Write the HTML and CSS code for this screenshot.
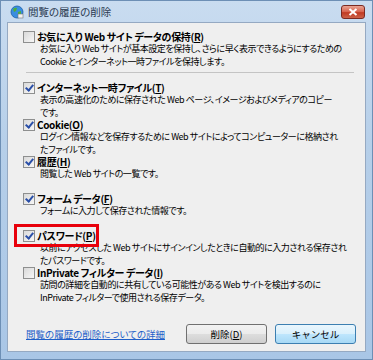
FILE: index.html
```html
<!DOCTYPE html>
<html lang="ja">
<head>
  <meta charset="UTF-8" />
  <title>閲覧の履歴の削除</title>
  <link rel="stylesheet" href="styles.css">
</head>
<body>
  <div class="window">
    <div class="titlebar">
      <svg class="app-icon" width="14" height="14" viewBox="0 0 14 14">
        <circle cx="7" cy="7" r="6" fill="#3a8ee0" stroke="#1c5ea8" stroke-width="0.8"/>
        <path d="M3 4 Q5 2 7 3 L6 6 L4 7 Z" fill="#4caf3c"/>
        <path d="M8 7 L11 6 L11 10 L8 11 Z" fill="#4caf3c"/>
        <rect x="8" y="9" width="5" height="4" fill="#f2f2f2" stroke="#777" stroke-width="0.6"/>
      </svg>
      <span class="title">閲覧の履歴の削除</span>
      <div class="close-btn">
        <svg width="10" height="8" viewBox="0 0 10 8">
          <path d="M1.5 1 L8.5 7 M8.5 1 L1.5 7" stroke="#fff" stroke-width="2"/>
        </svg>
      </div>
    </div>

    <div class="content">
      <div class="item">
        <div class="label"><span class="box"></span>お気に入り Web サイト データの保持(<u>R</u>)</div>
        <div class="desc">お気に入り Web サイトが基本設定を保持し、さらに早く表示できるようにするための<br>Cookie とインターネット一時ファイルを保持します。</div>
      </div>
      <hr class="sep">

      <div class="item">
        <div class="label"><span class="box checked"></span>インターネット一時ファイル(<u>T</u>)</div>
        <div class="desc">表示の高速化のために保存された Web ページ、イメージおよびメディアのコピー<br>です。</div>
      </div>
      <div class="item">
        <div class="label"><span class="box checked"></span>Cookie(<u>O</u>)</div>
        <div class="desc">ログイン情報などを保存するために Web サイトによってコンピューターに格納され<br>たファイルです。</div>
      </div>
      <div class="item">
        <div class="label"><span class="box checked"></span>履歴(<u>H</u>)</div>
        <div class="desc">閲覧した Web サイトの一覧です。</div>
      </div>
      <div class="item">
        <div class="label"><span class="box checked"></span>フォーム データ(<u>F</u>)</div>
        <div class="desc">フォームに入力して保存された情報です。</div>
      </div>
      <div class="item">
        <div class="label"><span class="box checked"></span>パスワード(<u>P</u>)</div>
        <div class="desc">以前にアクセスした Web サイトにサインインしたときに自動的に入力される保存され<br>たパスワードです。</div>
        <div class="highlight"></div>
      </div>
      <div class="item">
        <div class="label"><span class="box"></span>InPrivate フィルター データ(<u>I</u>)</div>
        <div class="desc">訪問の詳細を自動的に共有している可能性がある Web サイトを検出するのに<br>InPrivate フィルターで使用される保存データ。</div>
      </div>

      <div class="footer">
        <a class="link" href="#">閲覧の履歴の削除についての詳細</a>
        <div class="buttons">
          <button class="btn">削除(<u>D</u>)</button>
          <button class="btn default">キャンセル</button>
        </div>
      </div>
    </div>
  </div>
</body>
</html>
```

FILE: styles.css
```css
body {
  margin: 0;
  font-family: "Noto Sans CJK JP", "Liberation Sans", sans-serif;
  font-feature-settings: "palt";
  background: #ffffff;
}

.window {
  width: 373px;
  height: 360px;
  box-sizing: border-box;
  background: linear-gradient(180deg, #c9dcf0 0%, #b6cfe9 40%, #a9c6e6 100%);
  border: 1px solid #6d8fb5;
  display: flex;
  flex-direction: column;
}

.titlebar {
  height: 21px;
  display: flex;
  align-items: center;
  padding: 0 7px 0 9px;
}
.app-icon {
  margin-right: 4px;
  margin-top: 1px;
}
.title {
  font-size: 10.5px;
  color: #2a3a50;
  flex: 1;
}
.close-btn {
  width: 22px;
  height: 12px;
  border: 1px solid #7b2a22;
  border-radius: 3px;
  background: linear-gradient(180deg, #e9a494 0%, #d7614c 50%, #c03a23 55%, #cc6148 100%);
  display: flex;
  align-items: center;
  justify-content: center;
  margin-top: 1px;
}

.content {
  margin: 0 6px 7px 6px;
  flex: 1;
  background: #efefef;
  border: 1px solid #95a9c2;
  padding: 8px 0 0 15px;
  display: flex;
  flex-direction: column;
}

.item {
  height: 37px;
  flex: none;
  position: relative;
}
.label {
  display: flex;
  align-items: center;
  font-size: 10px;
  font-weight: bold;
  letter-spacing: -0.35px;
  line-height: 12px;
  height: 12px;
  color: #000;
}
.label u, .btn u {
  text-decoration: underline;
}
.box {
  width: 10px;
  height: 10px;
  border: 1px solid #8e8f8f;
  background: linear-gradient(135deg, #d9d9d9, #f7f7f7);
  margin-right: 2px;
  flex: none;
  position: relative;
}
.box.checked::after {
  content: "";
  position: absolute;
  left: 3px;
  top: 0px;
  width: 3px;
  height: 6px;
  border: solid #2a4fa8;
  border-width: 0 2px 2px 0;
  transform: rotate(40deg);
}
.desc {
  margin-left: 17px;
  font-size: 9px;
  letter-spacing: -0.45px;
  line-height: 12.5px;
  color: #000;
  white-space: nowrap;
}

.sep {
  border: none;
  border-top: 1px solid #c4c4c4;
  margin: 4px 11px 9px 3px;
}

.highlight {
  position: absolute;
  left: -9px;
  top: -6px;
  width: 79px;
  height: 17px;
  border: 3px solid #e8000b;
}

.footer {
  margin-top: 20px;
  display: flex;
  align-items: center;
  justify-content: space-between;
  padding-right: 9px;
}
.link {
  font-size: 9.5px;
  color: #1f5fc9;
  text-decoration: underline;
  margin-left: 3px;
}
.buttons {
  display: flex;
  gap: 8px;
}
.btn {
  width: 81px;
  height: 20px;
  font-family: inherit;
  font-size: 9.5px;
  padding: 0;
  border: 1px solid #707070;
  border-radius: 3px;
  background: linear-gradient(180deg, #f2f2f2 0%, #ebebeb 50%, #dddddd 51%, #cfcfcf 100%);
  color: #000;
}
.btn.default {
  border-color: #3c7fb1;
  background: linear-gradient(180deg, #eaf6fd 0%, #d9f0fc 50%, #bee6fd 51%, #a7d9f5 100%);
}
```
